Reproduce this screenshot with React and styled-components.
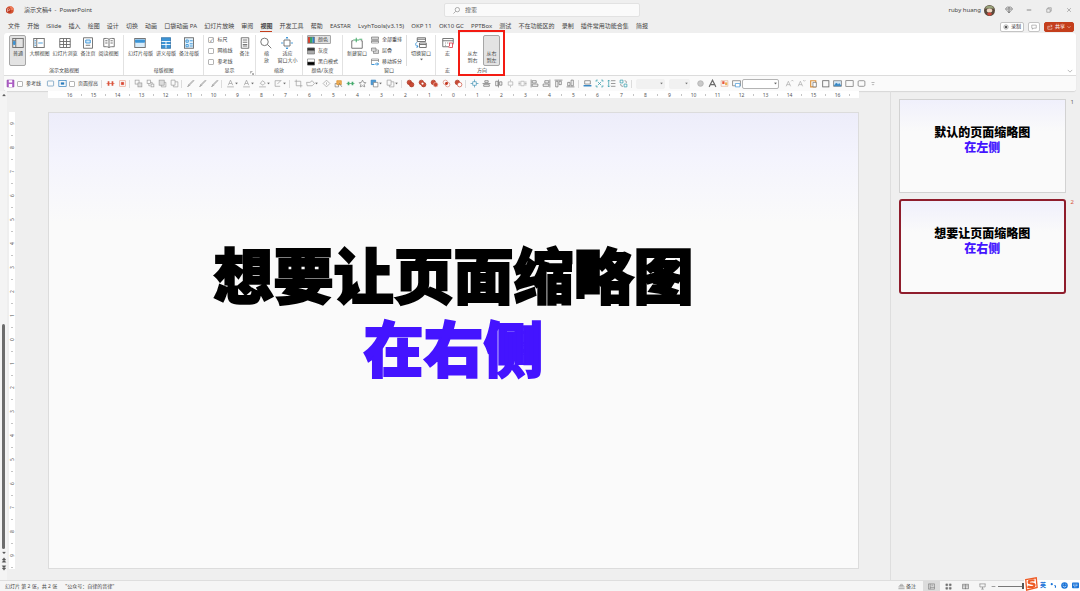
import React from "react";
import styled, { createGlobalStyle } from 'styled-components';


const GlobalStyle = createGlobalStyle`
  * {
    box-sizing: border-box;
  }
  body {
    margin: 0;
    background-color: #efefef;
    color: #444;
    font-family: "Noto Sans", "Noto Sans CJK SC", sans-serif;
    font-size: 5px;
    line-height: 7px;
  }
  button, input, select {
    margin: 0;
    padding: 0;
    border: 0;
    background: none;
    color: inherit;
    font: inherit;
  }
`
const Window = styled.div`
  display: flex;
  flex-direction: column;
  min-height: 100vh;
`

/* title bar */
const TitleBar = styled.header`
  display: flex;
  align-items: center;
  height: 20px;
  padding: 0 1px 0 5px;
`
const TitleLeft = styled.div`
  display: flex;
  flex: 1;
  align-items: center;
  gap: 9px;
  font-size: 6px;
  white-space: pre;
`
const SearchBox = styled.label`
  display: flex;
  align-items: center;
  gap: 5px;
  width: 196px;
  height: 14px;
  padding: 0 8px;
  border: 1px solid #e2e2e2;
  border-radius: 2px;
  background-color: #fafafa;
`
const SearchInput = styled.input`
  flex: 1;
  min-width: 0;
  outline: none;
  font-size: 6px;
  &::placeholder {
    color: #666;
    opacity: 1;
  }
`
const TitleRight = styled.div`
  display: flex;
  flex: 1;
  align-items: center;
  justify-content: flex-end;
  font-size: 6px;
`
const Account = styled.button`
  display: flex;
  align-items: center;
  gap: 3px;
  margin-right: 4px;
`
const WinButton = styled.button`
  display: flex;
  align-items: center;
  justify-content: center;
  width: 20px;
  height: 14px;
`

/* tabs */
const TabRow = styled.div`
  display: flex;
  align-items: center;
  height: 13px;
  padding: 0 6px 0 8px;
`
const TabList = styled.nav`
  display: flex;
  flex: 0 1 640px;
  justify-content: space-between;
`
const Tab = styled.button`
  height: 11px;
  border-bottom: 1px solid ${(props) => (props.$on ? '#c43e1c' : 'transparent')};
  font-size: 6px;
  font-weight: ${(props) => (props.$on ? 700 : 400)};
  white-space: nowrap;
`
const TabActions = styled.div`
  display: flex;
  gap: 4px;
  margin-left: auto;
`
const ActionButton = styled.button`
  display: flex;
  align-items: center;
  justify-content: center;
  gap: 2px;
  height: 10px;
  padding: 0 2px;
  border: 1px solid ${(props) => (props.$primary ? '#c43e1c' : '#c4c4c4')};
  border-radius: 2px;
  background-color: ${(props) => (props.$primary ? '#c43e1c' : '#fff')};
  color: ${(props) => (props.$primary ? '#fff' : '#333')};
`

/* ribbon */
const Panel = styled.section`
  margin: 0 4px;
  border-radius: 3px;
  background-color: #fff;
  box-shadow: 0 1px 1px #d6d6d6;
`
const Ribbon = styled.div`
  display: flex;
  height: 43px;
  padding: 2px 0 0 1px;
  border-bottom: 1px solid #dcdcdc;
`
const Group = styled.div`
  position: relative;
  flex: 0 0 ${(props) => props.$w}px;
  height: 40px;
  border-right: 1px solid ${(props) => (props.$last ? 'transparent' : '#e2e2e2')};
`
const GroupBody = styled.div`
  display: flex;
  justify-content: center;
  gap: ${(props) => props.$gap || 3}px;
  height: 31px;
`
const GroupName = styled.div`
  padding-top: 1px;
  text-align: center;
`
const Launcher = styled.span`
  position: absolute;
  right: 1px;
  bottom: 0;
  display: flex;
`
const Highlight = styled.div`
  position: absolute;
  top: -5px;
  right: -1px;
  bottom: -1px;
  left: -2px;
  border: 2px solid #f31b12;
  pointer-events: none;
`
const BigButton = styled.button`
  display: flex;
  flex-direction: column;
  align-items: center;
  gap: 1px;
  min-width: ${(props) => props.$w || 0}px;
  height: 31px;
  padding-top: 1px;
  border: ${(props) => (props.$on ? '1px solid #a6a6a6' : '0')};
  border-top-width: 1px;
  border-top-style: solid;
  border-top-color: ${(props) => (props.$on ? '#a6a6a6' : 'transparent')};
  border-radius: 2px;
  background-color: ${(props) => (props.$on ? '#e3e3e3' : 'transparent')};
  white-space: pre;
`
const Blank = styled.span`
  flex: 0 0 12px;
`
const Stack = styled.div`
  display: flex;
  flex-direction: column;
  gap: 2px;
`
const SmallButton = styled.button`
  display: flex;
  align-items: center;
  gap: 3px;
  width: ${(props) => (props.$on ? '24px' : 'auto')};
  height: 9px;
  border-radius: 1px;
  outline: ${(props) => (props.$on ? '1px solid #a6a6a6' : 'none')};
  outline-offset: -1px;
  background-color: ${(props) => (props.$on ? '#e3e3e3' : 'transparent')};
  white-space: nowrap;
`
const CheckLabel = styled.label`
  display: flex;
  align-items: center;
  gap: 3px;
  height: 9px;
  margin: 0 ${(props) => props.$gap || 0}px 0 ${(props) => (props.$gap ? 1 : 0)}px;
  white-space: nowrap;
`
const Check = styled.input`
  appearance: none;
  display: grid;
  place-items: center;
  width: 6px;
  height: 6px;
  border: 1px solid #b4b4b4;
  border-radius: 1px;
  background-color: #fff;
  &:checked::after {
    content: "✓";
    color: #555;
    font-size: 5px;
    line-height: 4px;
  }
`
const Rule = styled.span`
  width: 1px;
  height: ${(props) => props.$h}px;
  margin: ${(props) => props.$m || '0'};
  background-color: #dcdcdc;
`
const Fold = styled.button`
  display: flex;
  align-self: flex-end;
  margin: 0 3px 1px auto;
`

/* quick access bar */
const QuickBar = styled.div`
  display: flex;
  align-items: center;
  height: 15px;
  border-radius: 0 0 3px 3px;
  background-color: #fafafa;
`
const QuickButton = styled.button`
  display: flex;
  align-items: center;
  justify-content: center;
  width: ${(props) => (props.$menu ? 16 : 12)}px;
  height: 12px;
`
const DropBox = styled.select`
  appearance: none;
  width: ${(props) => props.$w}px;
  height: 10px;
  margin-right: 4px;
  border: 1px solid ${(props) => (props.$live ? '#b4b4b4' : '#eee')};
  border-radius: 2px;
  background-color: ${(props) => (props.$live ? '#fff' : '#eee')};
`
const DropWrap = styled.label`
  position: relative;
  display: flex;
`
const DropArrow = styled.span`
  position: absolute;
  top: 3px;
  right: 6px;
  display: flex;
`

/* workspace */
const Workspace = styled.main`
  display: flex;
  flex: 1;
`
const Editor = styled.div`
  display: flex;
  flex: 1;
  gap: 2px;
`
const ScrollBar = styled.div`
  display: flex;
  flex-direction: column;
  align-items: center;
  gap: 2px;
  width: 7px;
  padding: 2px 0 9px;
  background-color: #f4f4f4;
`
const ScrollTrack = styled.div`
  display: flex;
  flex: 1;
  align-items: flex-end;
`
const ScrollThumb = styled.div`
  width: 3px;
  height: 50%;
  border-radius: 2px;
  background-color: #6d6d6d;
`
const Canvas = styled.div`
  display: grid;
  flex: 1;
  grid-template-columns: 6px 1fr;
  grid-template-rows: 7px auto;
  gap: 14px 33px;
  align-content: start;
  padding-right: 31px;
`
const HorizontalRuler = styled.div`
  display: flex;
  grid-column: 2;
  justify-content: center;
  background-color: #fff;
  color: #555;
`
const VerticalRuler = styled.div`
  display: flex;
  flex-direction: column;
  justify-content: center;
  background-color: #fff;
  color: #555;
`
const Mark = styled.span`
  position: relative;
  display: flex;
  flex: 0 0 24px;
  align-items: center;
  justify-content: center;
  writing-mode: ${(props) => (props.$vertical ? 'vertical-rl' : 'horizontal-tb')};
  rotate: ${(props) => (props.$vertical ? '180deg' : '0deg')};
  line-height: 6px;
  &::after {
    content: "";
    position: absolute;
    top: ${(props) => (props.$vertical ? '0' : '3px')};
    right: ${(props) => (props.$vertical ? '2px' : '0')};
    width: ${(props) => (props.$vertical ? 2 : 1)}px;
    height: ${(props) => (props.$vertical ? 1 : 2)}px;
    background-color: #c4c4c4;
  }
`
const Slide = styled.article`
  display: flex;
  flex-direction: column;
  align-items: center;
  justify-content: center;
  aspect-ratio: 810 / 456;
  padding-bottom: 55px;
  border: 1px solid #dcdcdc;
  background: linear-gradient(#ededfa, #f4f4fd 10%, #fafafa 24%);
`
const Headline = styled.h1`
  margin: 0;
  color: ${(props) => (props.$accent ? '#4414ff' : '#000')};
  font-size: 60px;
  font-weight: 900;
  line-height: 73px;
  white-space: nowrap;
  -webkit-text-stroke: 2px ${(props) => (props.$accent ? '#4414ff' : '#000')};
`
const Thumbs = styled.aside`
  display: flex;
  flex: 0 0 190px;
  flex-direction: column;
  gap: 6px;
  padding: 8px 6px 0 8px;
  border-left: 1px solid #dedede;
`
const ThumbRow = styled.div`
  display: flex;
  gap: 5px;
  color: ${(props) => (props.$on ? '#d8553a' : '#666')};
  font-size: 6px;
`
const Thumb = styled.button`
  display: flex;
  flex: 1;
  flex-direction: column;
  align-items: center;
  justify-content: center;
  aspect-ratio: ${(props) => (props.$on ? '167 / 96' : '167 / 94')};
  padding-bottom: 12px;
  border: ${(props) => (props.$on ? '2px solid #8f1d2c' : '1px solid #d2d2d2')};
  border-radius: ${(props) => (props.$on ? 3 : 0)}px;
  background: linear-gradient(#f0f0fc, #fafafa 34%);
`
const ThumbText = styled.span`
  color: ${(props) => (props.$accent ? '#4414ff' : '#000')};
  font-size: 12px;
  font-weight: 900;
  line-height: 15px;
`

/* status bar */
const StatusBar = styled.footer`
  position: relative;
  display: flex;
  align-items: center;
  height: 11px;
  padding: 0 55px 0 5px;
  border-top: 1px solid #dedede;
  background-color: #f5f5f5;
`
const StatusText = styled.span`
  margin-right: 8px;
  white-space: pre;
`
const StatusRight = styled.div`
  display: flex;
  align-items: center;
  margin-left: auto;
`
const ViewButton = styled.button`
  display: flex;
  align-items: center;
  justify-content: center;
  gap: 1px;
  width: 17px;
  height: 10px;
  background-color: ${(props) => (props.$on ? '#dcdcdc' : 'transparent')};
  white-space: nowrap;
`
const NotesButton = styled(ViewButton)`
  width: 18px;
  margin-right: 7px;
`
const Zoom = styled.input`
  appearance: none;
  width: 27px;
  height: 1px;
  margin-left: 2px;
  background-color: #777;
  &::-webkit-slider-thumb {
    appearance: none;
    width: 2px;
    height: 6px;
    background-color: #555;
  }
`
const InputMethod = styled.div`
  position: absolute;
  right: 0;
  bottom: 0;
  display: flex;
  align-items: center;
  gap: 4px;
  height: 11px;
  padding: 0 1px 0 16px;
  background-color: #fff;
  color: #1b74d8;
  font-size: 6px;
  font-weight: 700;
`
const ImeLogo = styled.span`
  position: absolute;
  bottom: 0;
  left: 0;
  display: flex;
`

const box = (fill) => <rect x="1.5" y="3" width="13" height="10" fill={fill} />
const shapes = (c) => <><rect x="2" y="2" width="7" height="7" /><rect x="7" y="7" width="7" height="7" fill={c} /></>

const drawings = {
  normal: <><rect x="1" y="2" width="14" height="12" /><path d="M5 2v12M1 5h4M1 8h4" /><path d="M2 6h2v4H2z" fill="#3c94d6" stroke="#3c94d6" /></>,
  outline: <><rect x="1" y="2" width="14" height="12" /><path d="M5 2v12" /><path d="M2 5h2M2 8h2M2 11h2M7 8h6" stroke="#3c94d6" /></>,
  sorter: <path d="M1 2h14v12H1zM1 6h14M1 10h14M6 2v12M10 2v12" />,
  page: <><path d="M2 1h12v14H2z" /><path d="M5 4h6v4H5z" fill="#d8ecfa" stroke="#3c94d6" /><path d="M5 11h6" /></>,
  reading: <path d="M8 3C6 1.500 3 2 1 2v11c2 0 5-.5 7 1 2-1.500 5-1 7-1V2c-2 0-5-.5-7 1v11M3 5h3M3 8h3M10 5h3M10 8h3" />,
  master: <><rect x="1" y="2" width="14" height="12" fill="#d8ecfa" /><path d="M2 4h12v3H2z" fill="#3c94d6" stroke="#3c94d6" /></>,
  handout: <><rect x="2" y="1" width="12" height="14" fill="#3c94d6" stroke="#3c7cb0" /><path d="M2 6h12M2 10h12M8 6v9" stroke="#fff" /></>,
  notesMaster: <><rect x="2" y="1" width="12" height="14" fill="#e3f2fc" /><path d="M4 4h3v3H4zM9 5h4M9 9h4M4 10h3v3H4zM9 12h4" stroke="#3c94d6" /></>,
  notes: <path d="M3 1h10v14H3zM5 4h6M5 7h6M5 10h6M5 12h6" />,
  zoom: <path d="M11 6.500a5 5 0 1 1-10 0 5 5 0 0 1 10 0zM10 10l5 5" />,
  fit: <><path d="M4 4h8v8H4z" /><path d="M8 0v3M6.500 1.500L8 0l1.500 1.500M8 16v-3M6.500 14.500L8 16l1.500-1.500M0 8h3M16 8h-3" stroke="#3c94d6" /></>,
  color: <><path d="M1 2h5v12H1z" fill="#d9432f" stroke="none" /><path d="M6 2h5v12H6z" fill="#39a265" stroke="none" /><path d="M11 2h4v12h-4z" fill="#2d7fd0" stroke="none" /><path d="M1 2h14v12H1z" /></>,
  gray: <><path d="M1 2h14v12H1z" fill="#aaa" /><path d="M1 2h14v5H1z" fill="#333" /></>,
  mono: <><path d="M1 2h14v12H1z" fill="#fff" /><path d="M1 8h14v6H1z" fill="#000" /></>,
  newWindow: <><path d="M3 5H1v10h14V5h-2" /><path d="M7 1v6M3 4h8M11 3h4" stroke="#36a35d" /></>,
  arrange: <path d="M1 2h14v5H1zM1 9h14v5H1zM1 4h14M1 11h14" />,
  cascade: <path d="M1 2h9v6H1zM5 8v5h10V6h-5M1 4h9M5 10h10" />,
  split: <><path d="M1 13V2h14v6M1 5h14" /><path d="M1 13h6M8 12h7M12 9l3 3-3 3" stroke="#3c94d6" strokeWidth="2" /></>,
  switchWindow: <><path d="M3 1h11v5H3zM3 3h11M6 8h9v6H6zM6 10h9" /><path d="M3 7C0 8 0 12 4 13M2 14l2-1-1-2" stroke="#3c94d6" /></>,
  macro: <><path d="M9 13H1V2h14v6M1 5h14M4 8h1M7 8h1M4 11h1" /><path d="M9 8h5v6h-4c-2 0-1-2 0-2V8M14 9h2" stroke="#dd4d5b" /></>,
  save: <><path d="M2 2h12v12H2z" fill="#b05fc8" stroke="#8b3ba6" /><path d="M5 2h6v4H5zM5 9h6v5H5z" fill="#fff" stroke="none" /></>,
  rect: box('none'),
  blueRect: <rect x="2.500" y="3.500" width="11" height="9" rx="1" stroke="#5c8fb6" />,
  fitPage: <><rect x="1.500" y="2.500" width="13" height="11" stroke="#2b7cbc" /><path d="M5 6h6v4H5z" fill="#2b7cbc" stroke="none" /></>,
  redPair: <><path d="M3 4h3v8H3zM10 4h3v8h-3z" fill="#d9533b" stroke="none" /><path d="M1 8h14" stroke="#d9533b" /></>,
  redBox: <><rect x="3" y="3" width="10" height="10" stroke="#e9a18e" /><path d="M6 6h4v4H6z" fill="#d9432f" stroke="#d9432f" /></>,
  front: shapes('#ddd'),
  forward: <><rect x="2" y="2" width="6" height="6" /><path d="M5 8v4h3M8 6h3v3" /><rect x="9" y="9" width="5" height="5" /></>,
  backward: <><rect x="2" y="2" width="9" height="9" fill="#ddd" /><path d="M11 6h3v8H6v-3" /></>,
  back: <path d="M2 2h7v9H2zM9 5h5v9H6v-3" />,
  brush: <path d="M3 14l2-4 8-8 1 1-8 8-3 3zM5 10l2 2" />,
  textA: <path d="M4 11l4-9 4 9M5.500 8h5M2 14h12" />,
  fill: <path d="M4 8l4-5 5 4-4 4zM2 14h12" />,
  lineEdit: <path d="M12 3H2v10h9M6 9l7-7" />,
  crop: <path d="M4 1v11h11M1 4h11v11" />,
  shape: <path d="M1 6h6l4-3 4 5-4 4H2z" />,
  rotate: <path d="M8 2l6 6-6 6-6-6zM8 6v4" />,
  orange: <><path d="M2 8h6v6H2z" /><path d="M5 3h8v7H5z" fill="#efae55" stroke="#da8b24" /><path d="M9 7l5 7" /></>,
  green: <><path d="M1 8h14" stroke="#32965b" /><path d="M3 5h3v6H3zM10 5h3v6h-3z" fill="#43ac6c" stroke="none" /></>,
  star: <path d="M8 2l2 4 4 .5-3 3 1 4.500-4-2-4 2 1-4.500-3-3L6 6z" />,
  blueCopy: <><path d="M2 2h8v8H2z" fill="#4d9bd6" stroke="#2f7fbd" /><path d="M6 6h8v8H6z" fill="#fff" /></>,
  union: <><circle cx="6" cy="6" r="4" fill="#c94a35" stroke="#a7341f" /><circle cx="10" cy="10" r="4" fill="#c94a35" stroke="#a7341f" /></>,
  combine: <><circle cx="6" cy="6" r="4" fill="#c94a35" stroke="#a7341f" /><circle cx="10" cy="10" r="4" fill="#c94a35" stroke="#a7341f" /><circle cx="8" cy="8" r="2" fill="#fff" stroke="none" /></>,
  fragment: <><circle cx="6" cy="6" r="4" fill="#c94a35" stroke="#a7341f" /><circle cx="10" cy="10" r="4" fill="#c94a35" stroke="#e9b5aa" /></>,
  intersect: <><circle cx="6" cy="6" r="4" stroke="#d88877" /><circle cx="10" cy="10" r="4" stroke="#d88877" /><circle cx="8" cy="8" r="2.500" fill="#c2331c" stroke="none" /></>,
  subtract: <><circle cx="6" cy="6" r="4" fill="#c94a35" stroke="#a7341f" /><circle cx="10" cy="10" r="4" fill="#fff" stroke="#c94a35" /></>,
  target: <><path d="M8 1v14M1 8h14" stroke="#3b8fb2" /><rect x="5" y="5" width="6" height="6" fill="#fff" stroke="#3b8fb2" /></>,
  alignMid: <path d="M1 8h14M5 3h6v3H5zM3 10h10v3H3z" />,
  alignCenter: <path d="M8 1v14M3 4h4v8H3zM10 5h4v6h-4z" />,
  distV: <path d="M8 1v3M8 12v3M4 5h8v6H4z" />,
  distH: <path d="M1 8h3M12 8h3M5 4h6v8H5zM2 4v8M14 4v8" />,
  alignLeft: <path d="M2 1v14M4 3h7v4H4zM4 9h10v4H4z" />,
  alignRight: <path d="M14 1v14M5 3h7v4H5zM2 9h10v4H2z" />,
  alignTop: <path d="M1 2h14M3 4h4v10H3zM9 4h4v6H9z" />,
  alignBottom: <path d="M1 14h14M3 6h4v6H3zM9 2h4v10H9z" />,
  screen: <><path d="M3 3h10v6H3z" /><path d="M1 12h14" stroke="#2e82c2" strokeWidth="2.500" /></>,
  marquee: <><path d="M2 5V2h3M11 2h3v3M14 11v3h-3M5 14H2v-3" stroke="#2595a5" /><path d="M5 5l6 6M11 5l-6 6" stroke="#2595a5" /></>,
  lines: <><path d="M7 3h8M7 8h8M7 13h8" /><path d="M3 2v12M1 4l2-2 2 2M1 12l2 2 2-2" stroke="#2595a5" /></>,
  swap: <><path d="M2 2h5v5H2zM9 9h5v5H9z" stroke="#2595a5" /><path d="M10 3c3 0 3 2 3 4M3 9c0 3 1 4 4 4" /></>,
  dot: <circle cx="8" cy="8" r="5" fill="#c9c9c9" stroke="#aaa" />,
  bigA: <path d="M2 14L8 2l6 12M5 10h6" strokeWidth="2" />,
  palette: <><path d="M2 3h12v10H2z" stroke="#e0b29a" /><path d="M4 4h4v5H4z" fill="#e8573b" stroke="none" /><path d="M9 6h4v5H9z" fill="#efae55" stroke="none" /></>,
  picture2: <><path d="M1 3h14v9H1z" /><path d="M6 8h8v6H6z" fill="#fff" stroke="#3c94d6" /></>,
  fontUp: <path d="M2 13L6 4l4 9M3 10h6M11 4l2-2 2 2" />,
  fontDown: <path d="M2 13L6 4l4 9M3 10h6M11 2l2 2 2-2" />,
  paste: <><path d="M3 3h9v11H3z" stroke="#d9903a" strokeWidth="2" /><path d="M7 6h6v8H7z" fill="#fff" /></>,
  square: <rect x="3" y="3" width="11" height="11" strokeWidth="1.500" />,
  picture: <><path d="M1 3h14v10H1z" fill="#d6e8f6" /><path d="M2 12l4-5 3 3 2-2 3 4z" fill="#2e82c2" stroke="#2e82c2" /></>,
  round: <rect x="2" y="3" width="12" height="10" rx="2" />,
  more: <path d="M4 4h8M5 8l3 3 3-3" />,
  search: <path d="M15 6a5 5 0 1 1-10 0 5 5 0 0 1 10 0zM6 10l-5 5" />,
  diamond: <path d="M4 2h8l3 4-7 8-7-8zM1 6h14M6 6l2 8 2-8-2-4z" />,
  minimize: <path d="M2 8h12" strokeWidth="2" />,
  restore: <path d="M2 5h9v9H2zM5 5V2h9v9h-3" />,
  close: <path d="M3 3l10 10M13 3L3 13" />,
  record: <><circle cx="8" cy="8" r="6" /><circle cx="8" cy="8" r="3" fill="#333" /></>,
  comment: <path d="M2 3h12v8H7l-3 3v-3H2z" />,
  share: <path d="M6 6H2v8h11v-4M5 10c0-4 3-5 8-5M10 2l4 3-4 3" stroke="#fff" />,
  chevron: <path d="M2 5l6 6 6-6" />,
  chevronWhite: <path d="M2 5l6 6 6-6" stroke="#fff" strokeWidth="2" />,
  launcher: <path d="M2 10V2h8M6 6l8 8M14 8v6H8" strokeWidth="2" />,
  up: <path d="M2 12l6-8 6 8z" fill="#555" />,
  down: <path d="M2 4l6 8 6-8z" fill="#555" />,
  doubleUp: <path d="M3 8l5-6 5 6zM3 14l5-6 5 6z" fill="#555" />,
  doubleDown: <path d="M3 2l5 6 5-6zM3 8l5 6 5-6z" fill="#555" />,
  notesLine: <path d="M4 6l4-4 4 4zM1 9h14M1 13h14" />,
  viewNormal: <path d="M1 2h14v12H1zM5 2v12M5 10h10M8 5h4" />,
  viewGrid: <path d="M2 2h4v4H2zM10 2h4v4h-4zM2 10h4v4H2zM10 10h4v4h-4z" fill="#777" />,
  viewRead: <path d="M1 3h14v10H1zM8 3v11M3 6h3M3 9h3M10 6h3M10 9h3" strokeWidth="1.500" />,
  viewShow: <path d="M1 2h14M2 2v7h12V2M8 9v5M5 14h6" />,
}

function Icon ({ name, size = 9, color = '#6a6a6a' }) {
  return (
    <svg width={size} height={size} viewBox="0 0 16 16" fill="none" stroke={color} strokeWidth="1.2" aria-hidden="true">
      {drawings[name]}
    </svg>
  )
}

function Big ({ icon, text, on, w }) {
  return (
    <BigButton $on={on} $w={w}>
      {icon ? <Icon name={icon} size={12} /> : <Blank />}
      <span>{text}</span>
    </BigButton>
  )
}

function Quick ({ items, color }) {
  return items.map((item) => {
    const menu = item.endsWith('+')
    const name = item.replace('+', '')
    return (
      <QuickButton key={item} $menu={menu} aria-label={name}>
        <Icon name={name} color={color} />
        {menu && <Icon name="down" size={3} color="#999" />}
      </QuickButton>
    )
  })
}

function Ruler ({ max, vertical }) {
  const marks = Array.from({ length: max * 2 + 1 }, (_, i) => Math.abs(max - i))
  return marks.map((mark, i) => <Mark key={i} $vertical={vertical}>{mark}</Mark>)
}

export default function App () {

  const tabs = [
    '文件', '开始', 'iSlide', '插入', '绘图', '设计', '切换', '动画', '口袋动画 PA', '幻灯片放映',
    '审阅', '视图', '开发工具', '帮助', 'EASTAR', 'LvyhTools(v3.15)', 'OKP 11', 'OK10 GC',
    'PPTBox', '测试', '不在功能区的', '录制', '插件常用功能合集', '简报'
  ]

  const slides = [
    { id: 1, title: '默认的页面缩略图', sub: '在左侧' },
    { id: 2, title: '想要让页面缩略图', sub: '在右侧' }
  ]
  const current = slides[1]

  return (
    <>
      <GlobalStyle />
      <Window>
        <TitleBar>
          <TitleLeft>
            <svg width="10" height="10" viewBox="0 0 16 16">
              <circle cx="8" cy="8" r="6" fill="#d35230" />
              <path d="M8 2a6 6 0 0 1 6 6H8z" fill="#ee7d5a" />
              <rect x="2" y="5" width="7" height="7" rx="1" fill="#b7301b" />
              <path d="M4 11V6h2a1.500 1.500 0 0 1 0 3H4" fill="none" stroke="#f5d5cc" />
            </svg>
            <span>演示文稿4  -  PowerPoint</span>
          </TitleLeft>
          <SearchBox>
            <Icon name="search" size={7} />
            <SearchInput aria-label="搜索" placeholder="搜索" />
          </SearchBox>
          <TitleRight>
            <Account>
              ruby huang
              <svg width="11" height="11" viewBox="0 0 16 16">
                <circle cx="8" cy="8" r="8" fill="#5a4a3c" />
                <path d="M1 5a8 8 0 0 1 14 0z" fill="#97a27a" />
                <ellipse cx="8" cy="8" rx="4" ry="3" fill="#eed8c5" />
                <path d="M4 13q4-4 8 0l-4 3z" fill="#c9463a" />
              </svg>
            </Account>
            <WinButton aria-label="会员"><Icon name="diamond" size={8} /></WinButton>
            <WinButton aria-label="最小化"><Icon name="minimize" size={6} /></WinButton>
            <WinButton aria-label="还原"><Icon name="restore" size={6} /></WinButton>
            <WinButton aria-label="关闭"><Icon name="close" size={6} /></WinButton>
          </TitleRight>
        </TitleBar>

        <TabRow>
          <TabList>
            {tabs.map((tab) => <Tab key={tab} $on={tab === '视图'}>{tab}</Tab>)}
          </TabList>
          <TabActions>
            <ActionButton><Icon name="record" size={6} />录制</ActionButton>
            <ActionButton aria-label="批注"><Icon name="comment" size={6} /></ActionButton>
            <ActionButton $primary>
              <Icon name="share" size={6} />共享<Icon name="chevronWhite" size={4} />
            </ActionButton>
          </TabActions>
        </TabRow>

        <Panel>
          <Ribbon>
            <Group $w={119}>
              <GroupBody>
                <Big icon="normal" text="普通" on w={17} />
                <Big icon="outline" text="大纲视图" />
                <Big icon="sorter" text="幻灯片浏览" />
                <Big icon="page" text="备注页" />
                <Big icon="reading" text="阅读视图" />
              </GroupBody>
              <GroupName>演示文稿视图</GroupName>
            </Group>
            <Group $w={80}>
              <GroupBody>
                <Big icon="master" text="幻灯片母版" />
                <Big icon="handout" text="讲义母版" />
                <Big icon="notesMaster" text="备注母版" />
              </GroupBody>
              <GroupName>母版视图</GroupName>
            </Group>
            <Group $w={52}>
              <GroupBody $gap={6}>
                <Stack>
                  <CheckLabel><Check type="checkbox" defaultChecked />标尺</CheckLabel>
                  <CheckLabel><Check type="checkbox" />网格线</CheckLabel>
                  <CheckLabel><Check type="checkbox" />参考线</CheckLabel>
                </Stack>
                <Big icon="notes" text="备注" />
              </GroupBody>
              <GroupName>显示</GroupName>
              <Launcher><Icon name="launcher" size={4} /></Launcher>
            </Group>
            <Group $w={47}>
              <GroupBody $gap={5}>
                <Big icon="zoom" text={'缩\n放'} />
                <Big icon="fit" text={'适应\n窗口大小'} />
              </GroupBody>
              <GroupName>缩放</GroupName>
            </Group>
            <Group $w={40}>
              <GroupBody>
                <Stack>
                  <SmallButton $on><Icon name="color" size={8} />颜色</SmallButton>
                  <SmallButton><Icon name="gray" size={8} />灰度</SmallButton>
                  <SmallButton><Icon name="mono" size={8} />黑白模式</SmallButton>
                </Stack>
              </GroupBody>
              <GroupName>颜色/灰度</GroupName>
            </Group>
            <Group $w={93}>
              <GroupBody $gap={4}>
                <Big icon="newWindow" text="新建窗口" />
                <Stack>
                  <SmallButton><Icon name="arrange" size={8} />全部重排</SmallButton>
                  <SmallButton><Icon name="cascade" size={8} />层叠</SmallButton>
                  <SmallButton><Icon name="split" size={8} />移动拆分</SmallButton>
                </Stack>
                <Rule $h={31} />
                <BigButton>
                  <Icon name="switchWindow" size={12} />
                  <span>切换窗口</span>
                  <Icon name="down" size={3} />
                </BigButton>
              </GroupBody>
              <GroupName>窗口</GroupName>
            </Group>
            <Group $w={24}>
              <GroupBody>
                <Big icon="macro" text="宏" />
              </GroupBody>
              <GroupName>宏</GroupName>
            </Group>
            <Group $w={45} $last>
              <GroupBody $gap={2}>
                <Big text={'从左\n到右'} w={17} />
                <Big text={'从右\n到左'} w={17} on />
              </GroupBody>
              <GroupName>方向</GroupName>
              <Highlight />
            </Group>
            <Fold aria-label="折叠功能区"><Icon name="chevron" size={6} /></Fold>
          </Ribbon>

          <QuickBar>
            <Quick items={['save']} />
            <CheckLabel $gap={3}><Check type="checkbox" />参考线</CheckLabel>
            <Quick items={['blueRect', 'fitPage']} />
            <CheckLabel $gap={3}><Check type="checkbox" />页面撑高</CheckLabel>
            <Rule $h={8} $m="0 2px 0 0" />
            <Quick items={['redPair', 'redBox']} />
            <Rule $h={8} $m="0 2px 0 1px" />
            <Quick items={['front', 'forward', 'backward', 'back']} color="#999" />
            <Rule $h={8} $m="0 2px 0 1px" />
            <Quick items={['brush']} color="#888" />
            <Quick items={['brush']} color="#888" />
            <Quick items={['brush']} color="#888" />
            <Rule $h={8} $m="0 2px 0 1px" />
            <Quick items={['textA+']} color="#999" />
            <Quick items={['textA+', 'fill+', 'lineEdit+']} color="#999" />
            <Rule $h={8} $m="0 2px 0 1px" />
            <Quick items={['crop', 'shape+', 'rotate']} color="#999" />
            <Quick items={['orange', 'green', 'star', 'blueCopy+']} color="#777" />
            <Quick items={['back+']} color="#999" />
            <Rule $h={8} $m="0 2px 0 1px" />
            <Quick items={['union', 'combine', 'fragment', 'intersect', 'subtract']} />
            <Rule $h={8} $m="0 2px 0 1px" />
            <Quick items={['target', 'alignMid', 'alignCenter']} />
            <Quick items={['distV', 'distH']} color="#aaa" />
            <Quick items={['alignLeft', 'alignRight', 'alignTop', 'alignBottom']} />
            <Rule $h={8} $m="0 2px 0 2px" />
            <Quick items={['screen', 'marquee', 'lines', 'swap']} />
            <Rule $h={8} $m="0 4px 0 2px" />
            <DropWrap>
              <DropBox $w={29} aria-label="字体" disabled />
              <DropArrow><Icon name="down" size={3} color="#bbb" /></DropArrow>
            </DropWrap>
            <DropWrap>
              <DropBox $w={21} aria-label="字号" disabled />
              <DropArrow><Icon name="down" size={3} color="#bbb" /></DropArrow>
            </DropWrap>
            <Quick items={['dot', 'bigA', 'palette', 'picture2']} />
            <DropWrap>
              <DropBox $w={37} $live aria-label="样式" />
              <DropArrow><Icon name="down" size={3} /></DropArrow>
            </DropWrap>
            <Quick items={['fontUp', 'fontDown']} color="#aaa" />
            <Quick items={['paste', 'square', 'picture', 'rect', 'round']} />
            <QuickButton aria-label="更多"><Icon name="more" size={6} /></QuickButton>
          </QuickBar>
        </Panel>

        <Workspace>
          <Editor>
            <ScrollBar>
              <Icon name="up" size={4} />
              <ScrollTrack><ScrollThumb /></ScrollTrack>
              <Icon name="down" size={4} />
              <Icon name="doubleUp" size={6} />
              <Icon name="doubleDown" size={6} />
            </ScrollBar>
            <Canvas>
              <HorizontalRuler><Ruler max={16} /></HorizontalRuler>
              <VerticalRuler><Ruler max={9} vertical /></VerticalRuler>
              <Slide>
                <Headline>{current.title}</Headline>
                <Headline $accent>{current.sub}</Headline>
              </Slide>
            </Canvas>
          </Editor>
          <Thumbs>
            {
              slides.map((slide) => {
                const on = slide.id === current.id
                return (
                  <ThumbRow key={slide.id} $on={on}>
                    <Thumb $on={on}>
                      <ThumbText>{slide.title}</ThumbText>
                      <ThumbText $accent>{slide.sub}</ThumbText>
                    </Thumb>
                    <span>{slide.id}</span>
                  </ThumbRow>
                )
              })
            }
          </Thumbs>
        </Workspace>

        <StatusBar>
          <StatusText>幻灯片 第 2 张，共 2 张</StatusText>
          <StatusText>"公众号：自律的音律"</StatusText>
          <StatusRight>
            <NotesButton><Icon name="notesLine" size={7} />备注</NotesButton>
            <ViewButton $on aria-label="普通视图"><Icon name="viewNormal" size={7} /></ViewButton>
            <ViewButton aria-label="幻灯片浏览"><Icon name="viewGrid" size={7} /></ViewButton>
            <ViewButton aria-label="阅读视图"><Icon name="viewRead" size={7} /></ViewButton>
            <ViewButton aria-label="放映"><Icon name="viewShow" size={7} /></ViewButton>
            <Icon name="minimize" size={5} />
            <Zoom type="range" aria-label="缩放" defaultValue={96} />
          </StatusRight>
          <InputMethod>
            <ImeLogo>
              <svg width="14" height="14" viewBox="0 0 16 16">
                <path d="M2 3l12-2 1 11-12 3z" fill="#fff" stroke="#ee5a24" strokeWidth="1.500" />
                <path d="M12 4c-5-1-8 1-6 3 2 1 6 0 6 2 0 3-5 3-8 2" fill="none" stroke="#ee5a24" strokeWidth="2.500" />
              </svg>
            </ImeLogo>
            英
            <svg width="7" height="7" viewBox="0 0 16 16">
              <circle cx="4" cy="5" r="2.500" fill="#1b74d8" />
              <path d="M10 8q4 0 2 5" fill="none" stroke="#1b74d8" strokeWidth="2.500" />
            </svg>
            <svg width="7" height="7" viewBox="0 0 16 16">
              <circle cx="8" cy="8" r="7.500" fill="#1b74d8" />
              <path d="M4 5h2M10 5h2M4 9q4 5 8 0" fill="none" stroke="#fff" strokeWidth="1.500" />
            </svg>
            <svg width="7" height="7" viewBox="0 0 16 16">
              <rect y="1" width="16" height="13" rx="2" fill="#1b74d8" />
              <path d="M3 5h10M3 8h10M5 11h6" stroke="#fff" strokeDasharray="2 1" strokeWidth="1.500" />
            </svg>
          </InputMethod>
        </StatusBar>
      </Window>
    </>
  )
}
